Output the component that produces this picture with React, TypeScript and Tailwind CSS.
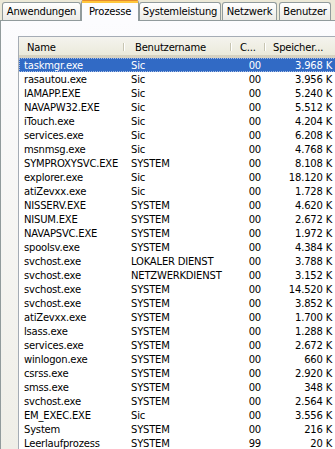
import React from "react";

const rows: [string, string, string, string][] = [
  ["taskmgr.exe", "Sic", "00", "3.968 K"],
  ["rasautou.exe", "Sic", "00", "3.956 K"],
  ["IAMAPP.EXE", "Sic", "00", "5.240 K"],
  ["NAVAPW32.EXE", "Sic", "00", "5.512 K"],
  ["iTouch.exe", "Sic", "00", "4.204 K"],
  ["services.exe", "Sic", "00", "6.208 K"],
  ["msnmsg.exe", "Sic", "00", "4.768 K"],
  ["SYMPROXYSVC.EXE", "SYSTEM", "00", "8.108 K"],
  ["explorer.exe", "Sic", "00", "18.120 K"],
  ["atiZevxx.exe", "Sic", "00", "1.728 K"],
  ["NISSERV.EXE", "SYSTEM", "00", "4.620 K"],
  ["NISUM.EXE", "SYSTEM", "00", "2.672 K"],
  ["NAVAPSVC.EXE", "SYSTEM", "00", "1.972 K"],
  ["spoolsv.exe", "SYSTEM", "00", "4.384 K"],
  ["svchost.exe", "LOKALER DIENST", "00", "3.788 K"],
  ["svchost.exe", "NETZWERKDIENST", "00", "3.152 K"],
  ["svchost.exe", "SYSTEM", "00", "14.520 K"],
  ["svchost.exe", "SYSTEM", "00", "3.852 K"],
  ["atiZevxx.exe", "SYSTEM", "00", "1.700 K"],
  ["lsass.exe", "SYSTEM", "00", "1.288 K"],
  ["services.exe", "SYSTEM", "00", "2.672 K"],
  ["winlogon.exe", "SYSTEM", "00", "660 K"],
  ["csrss.exe", "SYSTEM", "00", "2.920 K"],
  ["smss.exe", "SYSTEM", "00", "348 K"],
  ["svchost.exe", "SYSTEM", "00", "2.564 K"],
  ["EM_EXEC.EXE", "Sic", "00", "3.556 K"],
  ["System", "SYSTEM", "00", "216 K"],
  ["Leerlaufprozess", "SYSTEM", "99", "20 K"],
];

function Tab({ label, w, ml = 0 }: { label: string; w: number; ml?: number }) {
  return (
    <div
      className="mt-[2px] h-[18px] shrink-0 rounded-t-[3px] border border-b-0 border-[#919B9C] bg-gradient-to-b from-[#FFFFFF] to-[#ECEBE6] flex items-center justify-center"
      style={{ width: w, marginLeft: ml }}
    >
      {label}
    </div>
  );
}

function Sep() {
  return (
    <div className="absolute right-0 top-[4px] bottom-[4px] flex">
      <div className="w-px bg-[#C7C5B2]" />
      <div className="w-px bg-white" />
    </div>
  );
}

export default function App() {
  return (
    <div
      className="w-[335px] h-[449px] overflow-hidden bg-[#ECE9D8] text-[10px] tracking-[-0.2px] text-black"
      style={{ fontFamily: '"DejaVu Sans", Tahoma, sans-serif' }}
    >
      <div className="flex h-[20px] items-start pl-[2px]">
        <Tab label="Anwendungen" w={79} />
        <div className="relative z-10 h-[21px] w-[58px] shrink-0 rounded-t-[3px] border-x border-[#919B9C] bg-[#FCFCFE] flex flex-col">
          <div className="h-[1px] bg-[#E68B2C] rounded-t-[3px]" />
          <div className="h-[2px] bg-[#FFC73C]" />
          <div className="flex-1 flex items-start justify-center pt-[1px]">Prozesse</div>
        </div>
        <Tab label="Systemleistung" w={82} />
        <Tab label="Netzwerk" w={55} ml={1} />
        <Tab label="Benutzer" w={52} ml={2} />
      </div>
      <div className="h-[429px] border-l border-t border-[#919B9C] bg-gradient-to-b from-[#FCFCFE] to-[#EFEEE7] pl-[17px] pt-[15px]">
        <div className="w-[340px] h-[420px] border-l border-t border-[#A5ACB5] bg-white">
          <div className="flex h-[21px] pt-[2px] bg-gradient-to-b from-[#F4F3EE] to-[#EBEADB] border-b-[3px] border-[#D6D2C2]">
            <div className="relative w-[106px] shrink-0 pl-[8px] flex items-center">
              Name
              <Sep />
            </div>
            <div className="relative w-[107px] shrink-0 pl-[10px] flex items-center">
              Benutzername
              <Sep />
            </div>
            <div className="relative w-[34px] shrink-0 pl-[8px] flex items-center">
              C...
              <Sep />
            </div>
            <div className="relative w-[72px] shrink-0 pl-[7px] flex items-center">
              Speicher...
              <Sep />
            </div>
          </div>
          <div className="flex flex-col">
            {rows.map((r, i) => {
              const sel = i === 0;
              return (
                <div
                  key={i}
                  className={
                    sel
                      ? "flex h-[14px] items-center bg-[#316AC5] text-white outline-1 outline-dotted -outline-offset-1 outline-[#A9BEE3]"
                      : "flex h-[14px] items-center"
                  }
                >
                  <div className="w-[106px] shrink-0 pl-[5px] whitespace-nowrap">{r[0]}</div>
                  <div className="w-[107px] shrink-0 pl-[6px] whitespace-nowrap">{r[1]}</div>
                  <div className="w-[34px] shrink-0 pr-[5px] text-right">{r[2]}</div>
                  <div className="w-[72px] shrink-0 pr-[6px] text-right whitespace-nowrap">{r[3]}</div>
                </div>
              );
            })}
          </div>
        </div>
      </div>
    </div>
  );
}
